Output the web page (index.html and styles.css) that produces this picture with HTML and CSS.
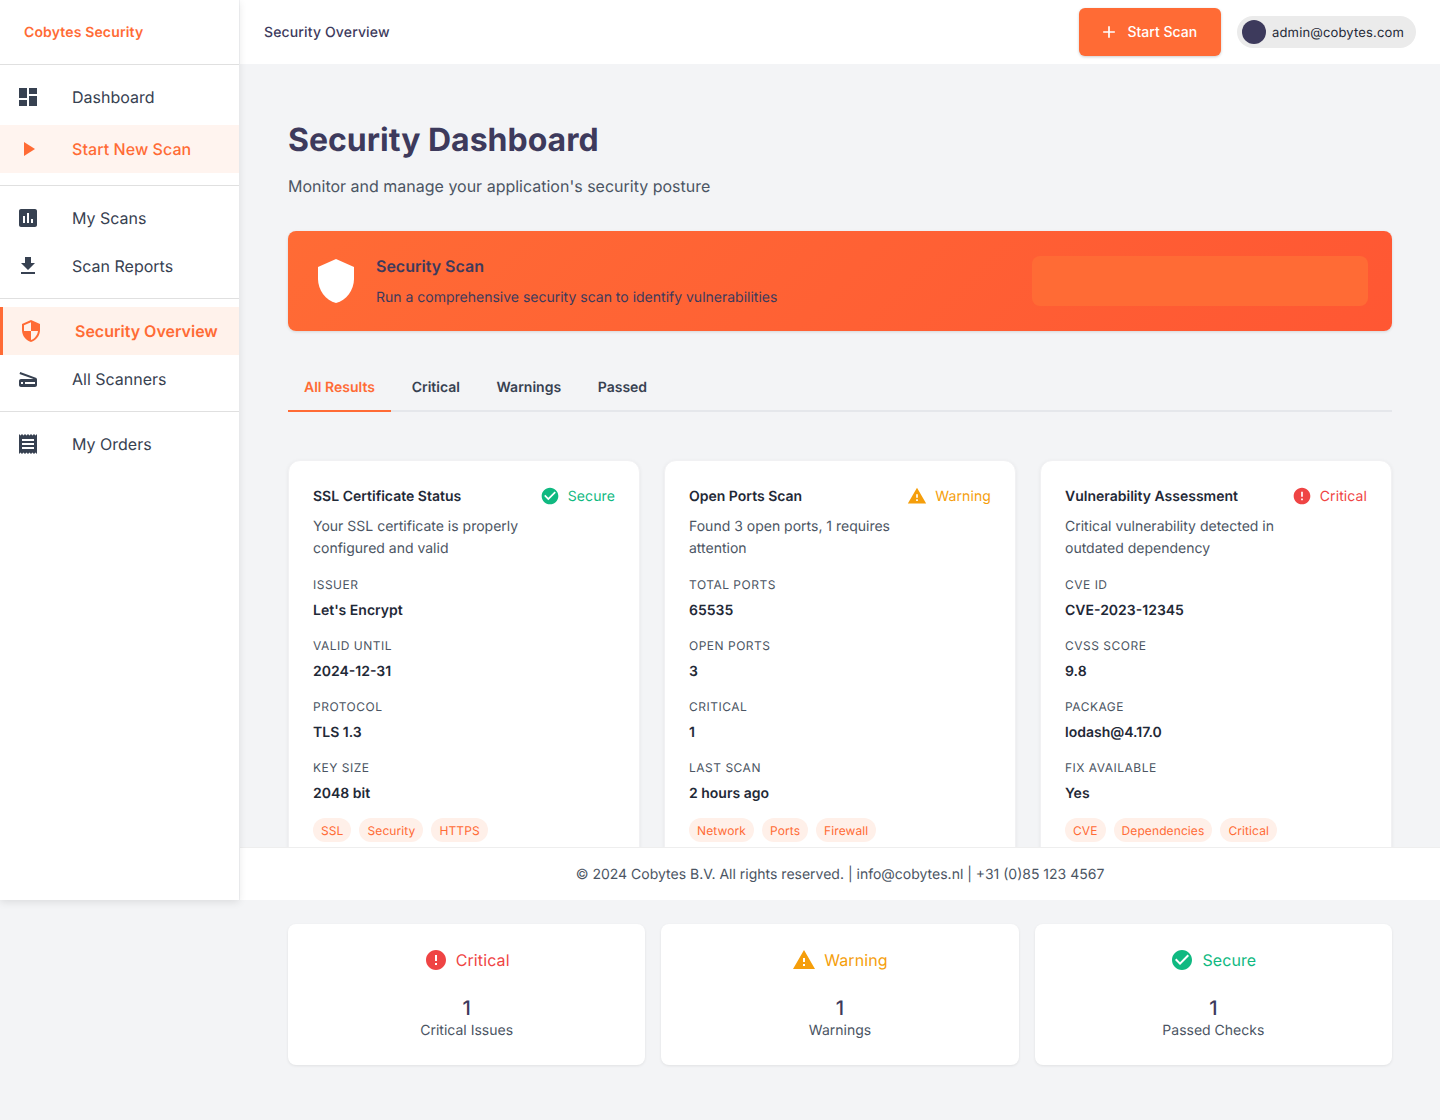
FILE: index.html
```html
<!DOCTYPE html>
<html lang="en">
<head>
<meta charset="UTF-8">
<meta name="viewport" content="width=device-width, initial-scale=1.0">
<title>Security Dashboard</title>
<link rel="stylesheet" href="styles.css">
</head>
<body>
  <aside class="sidebar">
    <div class="brand">Cobytes Security</div>
    <nav class="nav">
      <a class="nav-item"><svg class="nav-icon" viewBox="0 0 24 24"><path d="M3 13h8V3H3v10zm0 8h8v-6H3v6zm10 0h8V11h-8v10zm0-18v6h8V3h-8z"/></svg>Dashboard</a>
      <a class="nav-item nav-cta"><svg class="nav-icon" viewBox="0 0 24 24"><path d="M8 5v14l11-7z"/></svg>Start New Scan</a>
      <div class="nav-divider nav-divider-first"></div>
      <a class="nav-item"><svg class="nav-icon" viewBox="0 0 24 24"><path d="M19 3H5c-1.1 0-2 .9-2 2v14c0 1.1.9 2 2 2h14c1.1 0 2-.9 2-2V5c0-1.1-.9-2-2-2zM9 17H7v-7h2v7zm4 0h-2V7h2v10zm4 0h-2v-4h2v4z"/></svg>My Scans</a>
      <a class="nav-item"><svg class="nav-icon" viewBox="0 0 24 24"><path d="M19 9h-4V3H9v6H5l7 7 7-7zM5 18v2h14v-2H5z"/></svg>Scan Reports</a>
      <div class="nav-divider"></div>
      <a class="nav-item nav-active"><svg class="nav-icon" viewBox="0 0 24 24"><path d="M12 1L3 5v6c0 5.55 3.84 10.74 9 12 5.16-1.26 9-6.45 9-12V5l-9-4zm0 10.99h7c-.53 4.12-3.28 7.79-7 8.94V12H5V6.3l7-3.11v8.8z"/></svg>Security Overview</a>
      <a class="nav-item"><svg class="nav-icon" viewBox="0 0 24 24"><path d="M19.8 10.7L4.2 5l-.7 1.9L17.6 12H5c-1.1 0-2 .9-2 2v4c0 1.1.9 2 2 2h14c1.1 0 2-.9 2-2v-5.5c0-.8-.5-1.6-1.2-1.8zM7 17H5v-2h2v2zm12 0H9v-2h10v2z"/></svg>All Scanners</a>
      <div class="nav-divider"></div>
      <a class="nav-item"><svg class="nav-icon" viewBox="0 0 24 24"><path d="M18 17H6v-2h12v2zm0-4H6v-2h12v2zm0-4H6V7h12v2zM3 22l1.5-1.5L6 22l1.5-1.5L9 22l1.5-1.5L12 22l1.5-1.5L15 22l1.5-1.5L18 22l1.5-1.5L21 22V2l-1.5 1.5L18 2l-1.5 1.5L15 2l-1.5 1.5L12 2l-1.5 1.5L9 2 7.5 3.5 6 2 4.5 3.5 3 2v20z"/></svg>My Orders</a>
    </nav>
  </aside>

  <div class="page">
    <header class="topbar">
      <div class="topbar-title">Security Overview</div>
      <button class="scan-btn"><svg class="btn-icon" viewBox="0 0 24 24"><path d="M19 13h-6v6h-2v-6H5v-2h6V5h2v6h6v2z"/></svg>Start Scan</button>
      <div class="user-chip"><span class="avatar"></span><span class="user-email">admin@cobytes.com</span></div>
    </header>

    <main class="content">
      <h1 class="page-title">Security Dashboard</h1>
      <p class="page-sub">Monitor and manage your application's security posture</p>

      <section class="banner">
        <svg class="banner-icon" viewBox="0 0 24 24"><path d="M12 1L3 5v6c0 5.55 3.84 10.74 9 12 5.16-1.26 9-6.45 9-12V5l-9-4z"/></svg>
        <div class="banner-text">
          <div class="banner-title">Security Scan</div>
          <div class="banner-desc">Run a comprehensive security scan to identify vulnerabilities</div>
        </div>
        <div class="banner-slot"></div>
      </section>

      <div class="tabs">
        <div class="tab tab-active">All Results</div>
        <div class="tab">Critical</div>
        <div class="tab">Warnings</div>
        <div class="tab">Passed</div>
      </div>

      <section class="cards">
        <article class="card">
          <div class="card-head">
            <h3 class="card-title">SSL Certificate Status</h3>
            <div class="status secure"><svg class="status-icon" viewBox="0 0 24 24"><path d="M12 2C6.48 2 2 6.48 2 12s4.48 10 10 10 10-4.48 10-10S17.52 2 12 2zm-2 15l-5-5 1.41-1.41L10 14.17l7.59-7.59L19 8l-9 9z"/></svg>Secure</div>
          </div>
          <p class="card-desc">Your SSL certificate is properly configured and valid</p>
          <div class="field"><div class="field-label">Issuer</div><div class="field-value">Let's Encrypt</div></div>
          <div class="field"><div class="field-label">Valid Until</div><div class="field-value">2024-12-31</div></div>
          <div class="field"><div class="field-label">Protocol</div><div class="field-value">TLS 1.3</div></div>
          <div class="field"><div class="field-label">Key Size</div><div class="field-value">2048 bit</div></div>
          <div class="tags"><span class="tag">SSL</span><span class="tag">Security</span><span class="tag">HTTPS</span></div>
        </article>

        <article class="card">
          <div class="card-head">
            <h3 class="card-title">Open Ports Scan</h3>
            <div class="status warning"><svg class="status-icon" viewBox="0 0 24 24"><path d="M1 21h22L12 2 1 21zm12-3h-2v-2h2v2zm0-4h-2v-4h2v4z"/></svg>Warning</div>
          </div>
          <p class="card-desc">Found 3 open ports, 1 requires attention</p>
          <div class="field"><div class="field-label">Total Ports</div><div class="field-value">65535</div></div>
          <div class="field"><div class="field-label">Open Ports</div><div class="field-value">3</div></div>
          <div class="field"><div class="field-label">Critical</div><div class="field-value">1</div></div>
          <div class="field"><div class="field-label">Last Scan</div><div class="field-value">2 hours ago</div></div>
          <div class="tags"><span class="tag">Network</span><span class="tag">Ports</span><span class="tag">Firewall</span></div>
        </article>

        <article class="card">
          <div class="card-head">
            <h3 class="card-title">Vulnerability Assessment</h3>
            <div class="status critical"><svg class="status-icon" viewBox="0 0 24 24"><path d="M12 2C6.48 2 2 6.48 2 12s4.48 10 10 10 10-4.48 10-10S17.52 2 12 2zm1 15h-2v-2h2v2zm0-4h-2V7h2v6z"/></svg>Critical</div>
          </div>
          <p class="card-desc">Critical vulnerability detected in outdated dependency</p>
          <div class="field"><div class="field-label">CVE ID</div><div class="field-value">CVE-2023-12345</div></div>
          <div class="field"><div class="field-label">CVSS Score</div><div class="field-value">9.8</div></div>
          <div class="field"><div class="field-label">Package</div><div class="field-value">lodash@4.17.0</div></div>
          <div class="field"><div class="field-label">Fix Available</div><div class="field-value">Yes</div></div>
          <div class="tags"><span class="tag">CVE</span><span class="tag">Dependencies</span><span class="tag">Critical</span></div>
        </article>
      </section>

      <section class="summary">
        <div class="summary-card">
          <div class="summary-status critical"><svg class="summary-icon" viewBox="0 0 24 24"><path d="M12 2C6.48 2 2 6.48 2 12s4.48 10 10 10 10-4.48 10-10S17.52 2 12 2zm1 15h-2v-2h2v2zm0-4h-2V7h2v6z"/></svg>Critical</div>
          <div class="summary-value">1</div>
          <div class="summary-label">Critical Issues</div>
        </div>
        <div class="summary-card">
          <div class="summary-status warning"><svg class="summary-icon" viewBox="0 0 24 24"><path d="M1 21h22L12 2 1 21zm12-3h-2v-2h2v2zm0-4h-2v-4h2v4z"/></svg>Warning</div>
          <div class="summary-value">1</div>
          <div class="summary-label">Warnings</div>
        </div>
        <div class="summary-card">
          <div class="summary-status secure"><svg class="summary-icon" viewBox="0 0 24 24"><path d="M12 2C6.48 2 2 6.48 2 12s4.48 10 10 10 10-4.48 10-10S17.52 2 12 2zm-2 15l-5-5 1.41-1.41L10 14.17l7.59-7.59L19 8l-9 9z"/></svg>Secure</div>
          <div class="summary-value">1</div>
          <div class="summary-label">Passed Checks</div>
        </div>
      </section>
    </main>
  </div>

  <footer class="footer">© 2024 Cobytes B.V. All rights reserved. | info@cobytes.nl | +31 (0)85 123 4567</footer>
</body>
</html>
```

FILE: styles.css
```css
* {
  box-sizing: border-box;
}

body {
  font-family: 'Inter', sans-serif;
  margin: 0;
  padding: 0;
  min-height: 1120px;
  background-color: #f3f4f6;
  color: #1f2937;
  position: relative;
  text-rendering: geometricPrecision;
}

/* sidebar and footer sit on top of the scrolled content */
.sidebar {
  position: absolute;
  top: 0;
  left: 0;
  width: 239px;
  height: 900px;
  background: #fff;
  box-shadow: 0 2px 8px rgba(0, 0, 0, 0.1);
  z-index: 3;
}

.brand {
  height: 65px;
  padding: 2px 24px 0;
  display: flex;
  align-items: center;
  font-size: 14px;
  font-weight: 600;
  line-height: 18px;
  letter-spacing: 0.14px;
  color: #ff6b35;
  border-bottom: 1px solid #e0e0e0;
}

.nav {
  padding-top: 8px;
}

.nav-item {
  display: flex;
  align-items: center;
  height: 48px;
  padding-left: 16px;
  font-size: 16px;
  color: #374151;
}

.nav-icon {
  width: 24px;
  height: 24px;
  margin-right: 32px;
  fill: #374151;
  flex-shrink: 0;
}

.nav-cta {
  margin-top: 4px;
  background: #fff4ef;
  color: #ff6b35;
  font-weight: 500;
  letter-spacing: 0.07px;
}

.nav-cta .nav-icon,
.nav-active .nav-icon {
  fill: #ff6b35;
}

.nav-active {
  background: #fff2eb;
  color: #ff6b35;
  font-weight: 600;
  border-left: 3px solid #ff6b35;
}

.nav-divider {
  height: 1px;
  background: #e0e0e0;
  margin: 8px 0;
}

.nav-divider-first {
  margin-top: 12px;
}

.page {
  margin-left: 240px;
}

.topbar {
  height: 64px;
  background: #fff;
  display: flex;
  align-items: center;
  padding: 0 24px;
}

.topbar-title {
  flex: 1;
  font-size: 14px;
  font-weight: 500;
  letter-spacing: 0.14px;
  color: #3d3a5c;
}

.scan-btn {
  display: flex;
  align-items: center;
  gap: 8px;
  height: 48px;
  padding: 0 24px 1px 20px;
  border: none;
  border-radius: 6px;
  background: #ff6b35;
  color: #fff;
  font-family: inherit;
  font-size: 14px;
  font-weight: 500;
  box-shadow: 0 1px 3px rgba(0, 0, 0, 0.2);
  cursor: pointer;
}

.btn-icon {
  width: 20px;
  height: 20px;
  fill: #fff;
}

.user-chip {
  display: flex;
  align-items: center;
  gap: 6px;
  height: 32px;
  margin-left: 16px;
  padding: 0 12px 0 5px;
  border-radius: 16px;
  background: #ebebeb;
  font-size: 13px;
  letter-spacing: 0.15px;
  line-height: 20px;
  color: #1f2937;
}

.user-email {
  padding-top: 2px;
}

.avatar {
  width: 24px;
  height: 24px;
  border-radius: 50%;
  background: #3d3a5c;
}

.content {
  padding: 48px 48px 55px;
}

.page-title {
  margin: 0;
  font-size: 32px;
  line-height: 56px;
  font-weight: 700;
  color: #3d3a5c;
}

.page-sub {
  margin: 5px 0 32px;
  font-size: 16px;
  line-height: 26px;
  color: #4b5563;
}

.banner {
  display: flex;
  align-items: center;
  height: 100px;
  padding: 0 24px;
  border-radius: 8px;
  background: linear-gradient(135deg, #ff6b35, #ff5733);
  box-shadow: 0 1px 3px rgba(0, 0, 0, 0.12);
  color: #3d3a5c;
}

.banner-icon {
  width: 48px;
  height: 48px;
  fill: #fff;
  flex-shrink: 0;
}

.banner-text {
  flex: 1;
  margin-left: 16px;
}

.banner-title {
  font-size: 16px;
  font-weight: 600;
  line-height: 24px;
}

.banner-desc {
  margin-top: 9px;
  font-size: 14px;
  line-height: 22px;
}

.banner-slot {
  width: 336px;
  height: 50px;
  border-radius: 8px;
  background: #ff6b35;
}

.tabs {
  display: flex;
  margin-top: 32px;
  height: 49px;
  border-bottom: 2px solid #e5e7eb;
}

.tab {
  height: 49px;
  padding: 2px 16px 0;
  margin-right: 4.7px;
  display: flex;
  align-items: center;
  font-size: 14px;
  font-weight: 600;
  color: #374151;
  border-bottom: 2px solid transparent;
}

.tab-active {
  color: #ff6b35;
  border-bottom-color: #ff6b35;
}

.cards {
  display: grid;
  grid-template-columns: repeat(3, 1fr);
  gap: 24px;
  margin-top: 48px;
}

.card {
  background: #fff;
  border: 1px solid #f1f1f3;
  border-radius: 12px;
  padding: 25px 24px 24px;
  box-shadow: 0 1px 4px rgba(0, 0, 0, 0.06);
}

.card-head {
  display: flex;
  justify-content: space-between;
  align-items: center;
  height: 20px;
}

.card-title {
  margin: 0;
  font-size: 14px;
  font-weight: 600;
  color: #1f2937;
}

.status {
  display: flex;
  align-items: center;
  gap: 8px;
  font-size: 14px;
  letter-spacing: 0.1px;
}

.status-icon {
  width: 20px;
  height: 20px;
}

.secure {
  color: #10b981;
}

.warning {
  color: #f59e0b;
}

.critical {
  color: #ef4444;
}

.status-icon,
.summary-icon {
  fill: currentColor;
}

.card-desc {
  margin: 10px 0 0;
  max-width: 240px;
  font-size: 14px;
  line-height: 22px;
  color: #4b5563;
}

.field {
  margin-top: 16px;
}

.field-label {
  font-size: 12px;
  line-height: 18px;
  letter-spacing: 0.5px;
  text-transform: uppercase;
  color: #4b5563;
}

.field-value {
  margin-top: 6px;
  font-size: 14px;
  font-weight: 600;
  line-height: 21px;
  color: #1f2937;
}

.tags {
  display: flex;
  gap: 8px;
  margin-top: 14px;
}

.tag {
  height: 24px;
  padding: 0 8px;
  display: flex;
  align-items: center;
  border-radius: 12px;
  background: #fff0e9;
  color: #ff6b35;
  font-size: 12px;
  letter-spacing: 0.1px;
}

.summary {
  display: grid;
  grid-template-columns: repeat(3, 1fr);
  gap: 16px;
  margin-top: 57px;
}

.summary-card {
  height: 141px;
  padding: 24px;
  text-align: center;
  background: #fff;
  border-radius: 8px;
  box-shadow: 0 1px 3px rgba(0, 0, 0, 0.08);
}

.summary-status {
  display: flex;
  justify-content: center;
  align-items: center;
  gap: 8px;
  height: 24px;
  font-size: 16px;
  letter-spacing: 0.1px;
}

.summary-icon {
  width: 24px;
  height: 24px;
}

.summary-value {
  margin-top: 21px;
  font-size: 20px;
  font-weight: 500;
  line-height: 30px;
  color: #3d3a5c;
}

.summary-label {
  font-size: 14px;
  line-height: 16px;
  color: #4b5563;
}

.footer {
  position: absolute;
  top: 847px;
  left: 240px;
  right: 0;
  height: 53px;
  display: flex;
  align-items: center;
  justify-content: center;
  background: #fff;
  border-top: 1px solid #eeeeee;
  font-size: 14px;
  color: #4b5563;
  z-index: 2;
}
```
